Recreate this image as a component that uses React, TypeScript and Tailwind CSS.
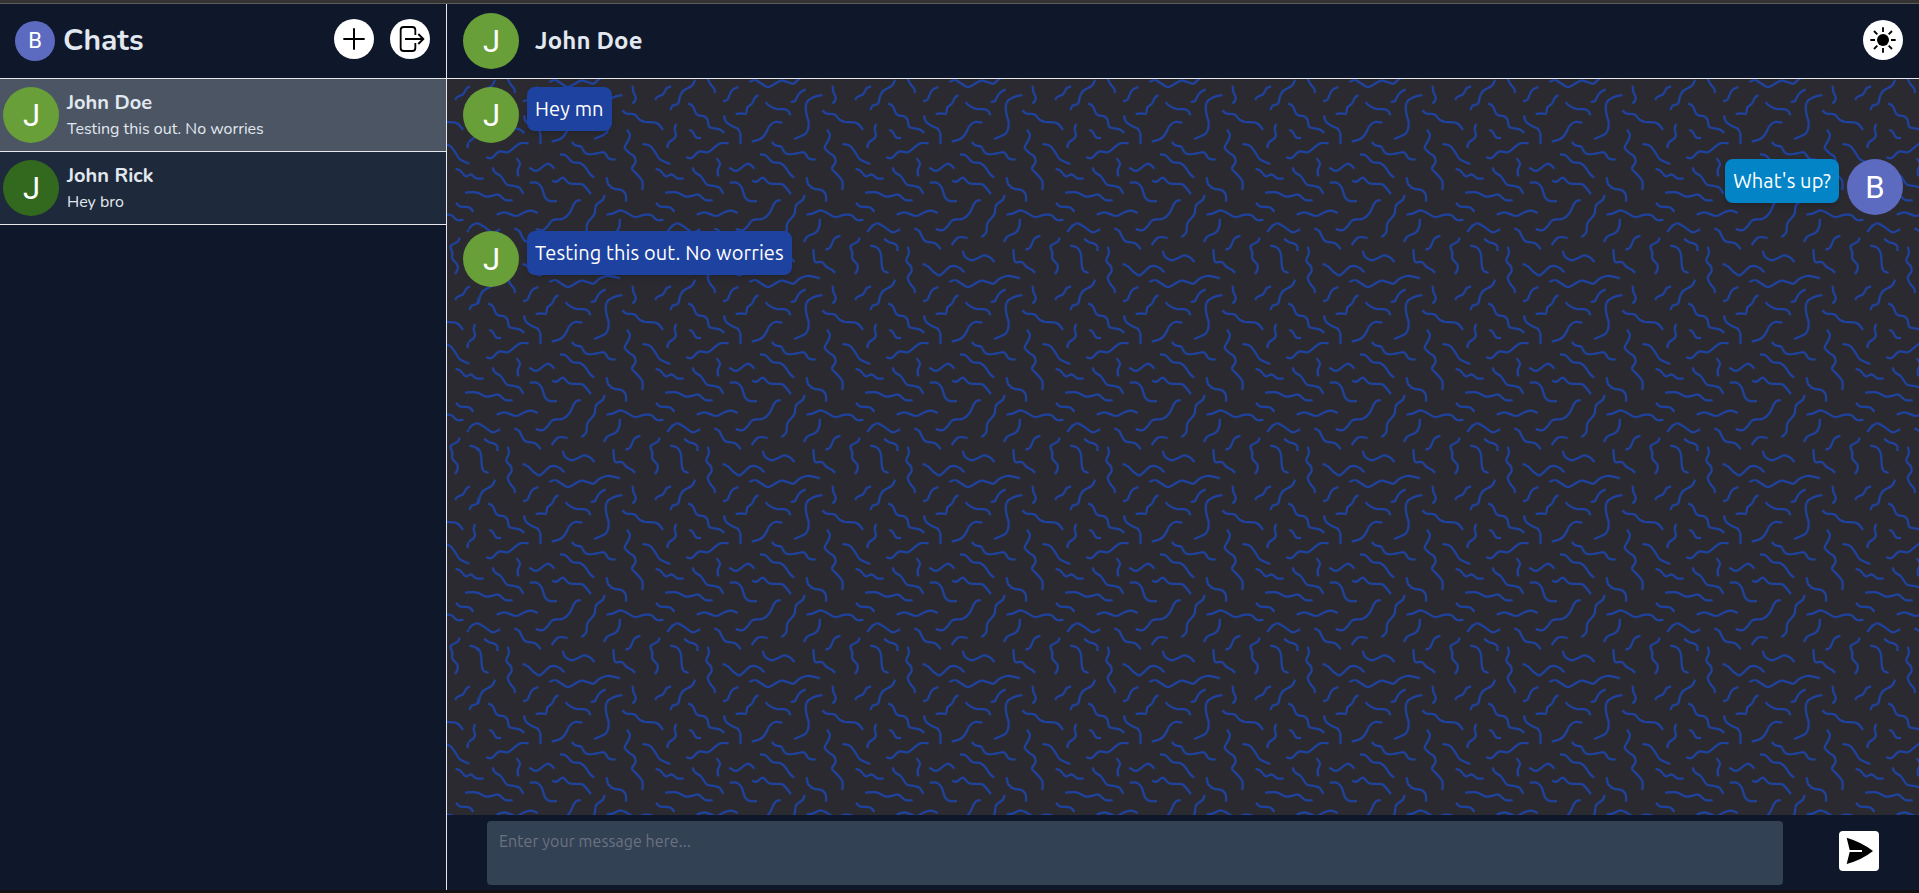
import React from "react";

type Point = [number, number];

const SQUIGGLES: Point[][] = [
  [[208,36],[225,30],[240,38],[262,51],[280,44],[303,32],[322,36],[340,41],[358,26],[380,18],[400,20],[420,25]],
  [[645,29],[636,47],[610,62],[600,80],[594,101],[578,107],[571,120]],
  [[83,530],[87,548],[79,572],[93,590],[94,605],[83,622],[90,640],[102,655],[105,669]],
  [[129,94],[143,88],[155,62],[175,51]],
  [[167,132],[182,130],[198,131],[202,112],[216,101],[224,84],[235,75]],
  [[257,97],[272,110],[290,117],[315,118],[325,123],[331,136]],
  [[332,96],[345,93],[357,71],[377,58]],
  [[427,75],[400,82],[380,98],[378,125],[386,160],[378,190],[342,207]],
  [[458,47],[460,65],[467,82],[464,94],[457,100]],
  [[525,90],[533,80],[549,73],[560,55],[573,49]],
  [[24,101],[38,108],[51,134],[73,139],[83,150],[88,171],[110,176],[122,180],[133,189]],
  [[132,136],[137,154],[154,167],[173,176],[181,192],[181,223]],
  [[215,214],[240,208],[256,192],[268,169],[285,156],[307,158]],
  [[427,121],[440,131],[463,133],[480,150],[495,156],[520,157],[535,162],[549,179]],
  [[588,162],[584,178],[588,196],[580,208],[566,218],[562,234]],
  [[28,179],[38,185],[48,202],[63,204]],
  [[19,262],[35,264],[57,245],[82,247],[100,235],[120,220],[146,220]],
  [[441,179],[450,195],[444,213],[434,233],[448,249],[463,260],[466,278],[456,296],[473,315],[487,334],[487,360]],
  [[487,222],[509,227],[525,246],[540,268],[571,282]],
  [[275,215],[285,226],[303,230],[313,246],[326,253],[350,250],[372,247],[383,262],[393,268],[407,268]],
  [[110,265],[120,282],[113,300],[115,319]],
  [[240,253],[258,257],[277,276],[300,279],[315,290],[330,312],[343,323]],
  [[148,293],[167,303],[182,295],[200,282],[213,285],[223,296]],
  [[38,292],[44,307],[62,318],[80,343],[102,348],[118,353],[130,371]],
  [[527,297],[540,301],[557,319],[575,313],[592,325],[611,326]],
  [[149,338],[170,338],[185,352],[195,382],[210,393],[231,393]],
  [[217,332],[230,335],[249,323],[267,340],[290,342],[310,345],[333,373]],
  [[380,322],[385,343],[402,356],[425,360],[437,374],[438,395]],
  [[555,368],[590,367],[620,380],[655,374],[675,390],[698,391]],
  [[528,399],[542,410],[570,412],[583,425]],
  [[50,434],[75,427],[108,438],[135,426],[155,422],[173,429]],
  [[302,390],[285,397],[268,430],[247,447],[218,450],[201,471],[187,481],[167,477]],
  [[374,375],[368,390],[348,406],[343,433],[322,460],[319,487],[305,501]],
  [[380,434],[400,430],[420,421],[440,428],[465,441],[495,434],[515,436],[531,450],[550,449]],
  [[562,486],[578,467],[593,460],[612,470],[638,487],[660,478]],
  [[103,475],[118,484],[135,513],[165,520],[183,538]],
  [[420,447],[418,470],[408,487],[382,500],[372,516]],
  [[215,525],[230,506],[243,501],[263,504]],
  [[437,539],[450,533],[463,506],[481,497]],
  [[13,506],[25,516],[44,521],[52,530],[52,543]],
  [[540,503],[532,516],[512,528],[517,548],[517,566],[531,583],[533,597],[525,612]],
  [[571,527],[590,532],[602,550],[606,590],[613,604],[626,608]],
  [[248,543],[256,561],[275,571],[295,564],[312,556],[330,562],[343,576]],
  [[400,537],[405,575],[425,576],[440,591],[455,599],[465,609]],
  [[128,581],[145,590],[163,608],[178,616],[190,608],[212,589],[235,592],[254,607]],
];

// Catmull-Rom spline through the points
function smooth(points: Point[]): string {
  let d = `M${points[0][0]} ${points[0][1]}`;
  for (let i = 0; i < points.length - 1; i++) {
    const a = points[Math.max(0, i - 1)];
    const b = points[i];
    const c = points[i + 1];
    const e = points[Math.min(points.length - 1, i + 2)];
    d += `C${b[0] + (c[0] - a[0]) / 6} ${b[1] + (c[1] - a[1]) / 6} ${c[0] - (e[0] - b[0]) / 6} ${c[1] - (e[1] - b[1]) / 6} ${c[0]} ${c[1]}`;
  }
  return d;
}

const WALLPAPER = SQUIGGLES.map(smooth).join("");

function Wallpaper() {
  return (
    <svg className="absolute inset-0 h-full w-full" aria-hidden="true">
      <defs>
        <pattern id="squiggles" width="600" height="600" patternUnits="userSpaceOnUse" patternTransform="translate(33 -9) scale(0.333333)">
          {[0, -600].map((x) =>
            [0, -600].map((y) => (
              <path key={`${x}${y}`} d={WALLPAPER} transform={`translate(${x} ${y})`} fill="none" stroke="#1e429f" strokeWidth="6.7" />
            ))
          )}
        </pattern>
      </defs>
      <rect width="100%" height="100%" fill="url(#squiggles)" />
    </svg>
  );
}

function Avatar({ letter, className }: { letter: string; className: string }) {
  return (
    <div className={`flex shrink-0 items-center justify-center rounded-full font-['Roboto',sans-serif] leading-none text-white ${className}`}>
      <span className={letter === "J" ? "pl-px" : ""}>{letter}</span>
    </div>
  );
}

function RoundButton({ label, children }: { label: string; children: React.ReactNode }) {
  return (
    <button aria-label={label} className="size-10 shrink-0 rounded-full bg-white text-black">
      <svg viewBox="0 0 120 120" className="size-10" fill="none" stroke="currentColor" strokeWidth="6">
        {children}
      </svg>
    </button>
  );
}

function ChatRow({ name, preview, color, active }: { name: string; preview: string; color: string; active?: boolean }) {
  return (
    <li className={`flex h-[73px] items-center border-b border-gray-200 pl-[3px] ${active ? "bg-[#4b5563]" : "bg-[#1e293b]"}`}>
      <Avatar letter="J" className={`size-14 text-[31px] ${color}`} />
      <div className="pl-2 text-slate-200">
        <p className="text-xl leading-7 font-bold">{name}</p>
        <p className="text-base leading-6">{preview}</p>
      </div>
    </li>
  );
}

function Message({ text, mine }: { text: string; mine?: boolean }) {
  return (
    <div className={`flex h-14 gap-2 ${mine ? "flex-row-reverse" : ""}`}>
      <Avatar letter={mine ? "B" : "J"} className={`size-14 text-[31px] ${mine ? "bg-[#5c6bc0]" : "bg-[#689f38]"}`} />
      <p className={`h-11 rounded-lg p-2 text-xl leading-7 tracking-[0.11px] whitespace-nowrap text-white shadow-md ${mine ? "bg-[#0284c7]" : "bg-[#1e429f]"}`}>
        {text}
      </p>
    </div>
  );
}

export default function App() {
  return (
    <div className="flex h-[893px] w-full flex-col overflow-hidden border-b-[3px] border-[#121212] bg-[#0f172a]">
      <div className="h-1 shrink-0 border-b border-[#5c5c5a] bg-[#333331]" />
      <div className="flex min-h-0 flex-1">
        <aside className="w-[447px] shrink-0 border-r border-gray-200 font-['Nunito','Open_Sans',sans-serif]">
          <header className="flex h-[75px] items-center border-b border-gray-200 pr-4 pl-[15px]">
            <Avatar letter="B" className="size-10 bg-[#5c6bc0] text-[22px]" />
            <h1 className="ml-2 text-3xl leading-9 font-bold text-slate-200">Chats</h1>
            <div className="mb-1 ml-auto flex gap-4">
              <RoundButton label="New chat">
                <path d="M28 60H92M60 28V92" />
              </RoundButton>
              <RoundButton label="Log out">
                <path strokeWidth="5.5" d="M76 48V33Q76 24 67 24H41Q32 24 32 33V87Q32 96 41 96H67Q76 96 76 87V72M45 60H99M85 45L100 60L85 75" />
              </RoundButton>
            </div>
          </header>
          <ul>
            <ChatRow name="John Doe" preview="Testing this out. No worries" color="bg-[#689f38]" active />
            <ChatRow name="John Rick" preview="Hey bro" color="bg-[#33691e]" />
          </ul>
        </aside>
        <main className="flex min-w-0 flex-1 flex-col font-['Ubuntu','Noto_Sans',sans-serif]">
          <header className="flex h-[75px] shrink-0 items-center border-b border-gray-200 px-4">
            <Avatar letter="J" className="size-14 bg-[#689f38] text-[31px]" />
            <h2 className="ml-4 text-2xl leading-8 font-bold tracking-[0.15px] text-slate-200">John Doe</h2>
            <div className="ml-auto -mt-0.5 h-10">
              <RoundButton label="Toggle theme">
                <circle cx="60" cy="60" r="18" fill="currentColor" stroke="none" />
                <path strokeWidth="5.5" d="M22 60H36M84 60H98M60 22V36M60 84V98M33 33L43 43M77 77L87 87M87 33L77 43M43 77L33 87" />
              </RoundButton>
            </div>
          </header>
          <section className="relative min-h-0 flex-1 bg-[#2b2a30]">
            <Wallpaper />
            <div className="relative flex flex-col gap-4 px-4 pt-2">
              <Message text="Hey mn" />
              <Message text="What's up?" mine />
              <Message text="Testing this out. No worries" />
            </div>
          </section>
          <footer className="flex h-[75px] shrink-0 items-center px-10">
            <textarea
              placeholder="Enter your message here..."
              className="h-16 w-[1296px] resize-none rounded bg-[#334155] px-3 py-2 text-base leading-6 tracking-[0.07px] text-white placeholder-[#6b7280]"
            />
            <button aria-label="Send" className="mb-[3px] ml-auto size-10 rounded bg-white text-black">
              <svg viewBox="0 0 120 120" className="size-10">
                <path fill="currentColor" d="M23 20Q70 34 102 60Q70 86 23 99L32 63H69V57H32Z" />
              </svg>
            </button>
          </footer>
        </main>
      </div>
    </div>
  );
}
